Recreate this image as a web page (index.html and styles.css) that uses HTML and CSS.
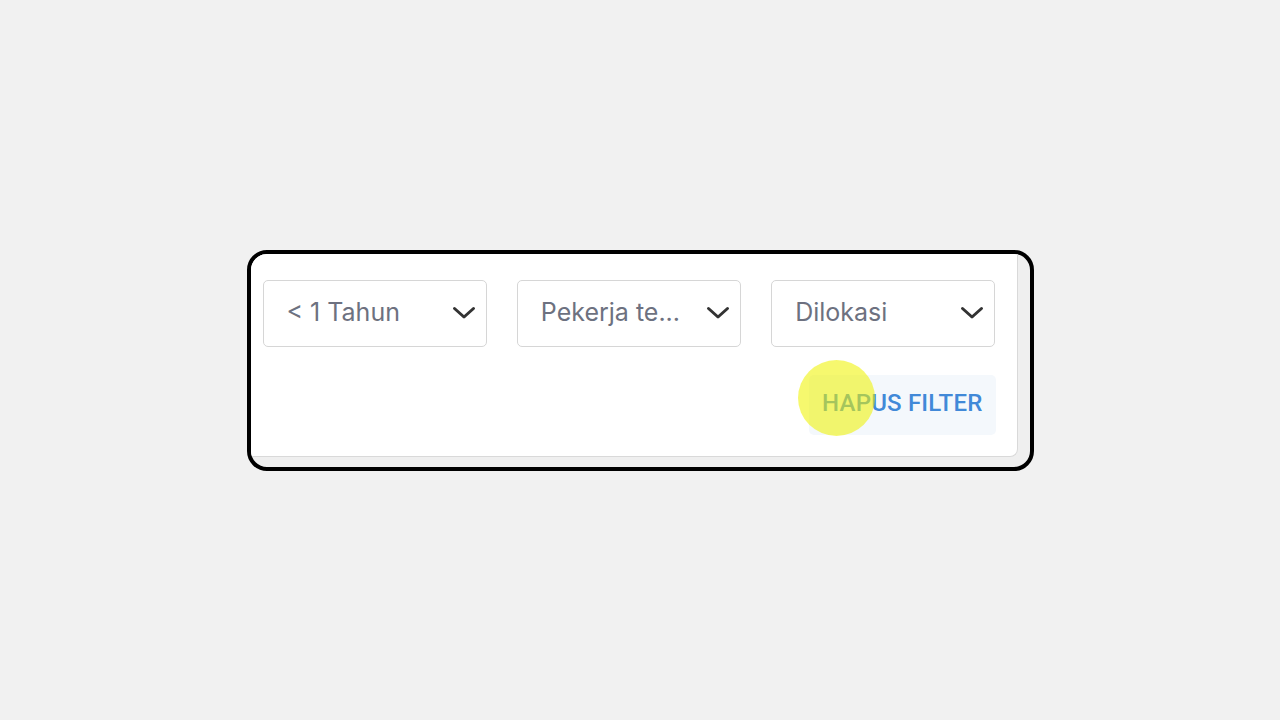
FILE: index.html
```html
<!DOCTYPE html>
<html lang="id">
<head>
<meta charset="utf-8">
<title>Filter</title>
<link rel="stylesheet" href="styles.css">
</head>
<body>
  <div class="frame">
    <div class="card">
      <div class="selects">
        <div class="select">
          <span class="select-text">&lt; 1 Tahun</span>
          <svg class="chevron" viewBox="0 0 24 14" width="24" height="14"><path d="M2.5 2.5 L12 11 L21.5 2.5" fill="none" stroke="#333" stroke-width="3" stroke-linecap="round" stroke-linejoin="round"/></svg>
        </div>
        <div class="select">
          <span class="select-text">Pekerja te...</span>
          <svg class="chevron" viewBox="0 0 24 14" width="24" height="14"><path d="M2.5 2.5 L12 11 L21.5 2.5" fill="none" stroke="#333" stroke-width="3" stroke-linecap="round" stroke-linejoin="round"/></svg>
        </div>
        <div class="select">
          <span class="select-text">Dilokasi</span>
          <svg class="chevron" viewBox="0 0 24 14" width="24" height="14"><path d="M2.5 2.5 L12 11 L21.5 2.5" fill="none" stroke="#333" stroke-width="3" stroke-linecap="round" stroke-linejoin="round"/></svg>
        </div>
      </div>
      <div class="actions">
        <button class="clear-btn">HAPUS FILTER</button>
        <span class="tap-indicator"></span>
      </div>
    </div>
  </div>
</body>
</html>
```
FILE: styles.css
```css
html, body {
  margin: 0;
  padding: 0;
}
body {
  width: 1280px;
  height: 720px;
  background: #f1f1f1;
  display: flex;
  align-items: center;
  justify-content: center;
}
.frame {
  width: 787px;
  height: 221px;
  box-sizing: border-box;
  border: 4px solid #000;
  border-radius: 20px;
  background: #efefef;
  overflow: hidden;
}
.card {
  width: 767px;
  height: 203px;
  box-sizing: border-box;
  background: #fff;
  border-right: 1px solid #d9d9d9;
  border-bottom: 1px solid #d9d9d9;
  border-bottom-right-radius: 8px;
  padding: 26px 21px 0 12px;
  display: flex;
  flex-direction: column;
  gap: 28px;
}
.selects {
  display: grid;
  grid-template-columns: 1fr 1fr 1fr;
  gap: 30px;
}
.select {
  height: 67px;
  box-sizing: border-box;
  border: 1.5px solid #d6d6d6;
  border-radius: 5px;
  display: flex;
  align-items: center;
  padding: 0 10px 0 23px;
  gap: 16px;
  min-width: 0;
}
.select-text {
  flex: 1;
  min-width: 0;
  font-family: "Inter", "Noto Sans", sans-serif;
  font-size: 25px;
  color: #6d7180;
  white-space: nowrap;
  padding-bottom: 2px;
}
.chevron {
  flex: none;
  width: 24px;
  height: 14px;
}
.actions {
  display: flex;
  justify-content: flex-end;
  position: relative;
}
.clear-btn {
  height: 60px;
  border: none;
  border-radius: 5px;
  background: #f4f8fc;
  color: #4189d8;
  font-family: "Roboto", "Noto Sans", sans-serif;
  font-weight: 500;
  font-size: 24px;
  padding: 0 13px 3px;
  letter-spacing: 0.2px;
}
.tap-indicator {
  position: absolute;
  left: 535px;
  top: -15px;
  width: 77px;
  height: 76px;
  border-radius: 50%;
  background: rgba(239, 242, 0, 0.57);
}
```
